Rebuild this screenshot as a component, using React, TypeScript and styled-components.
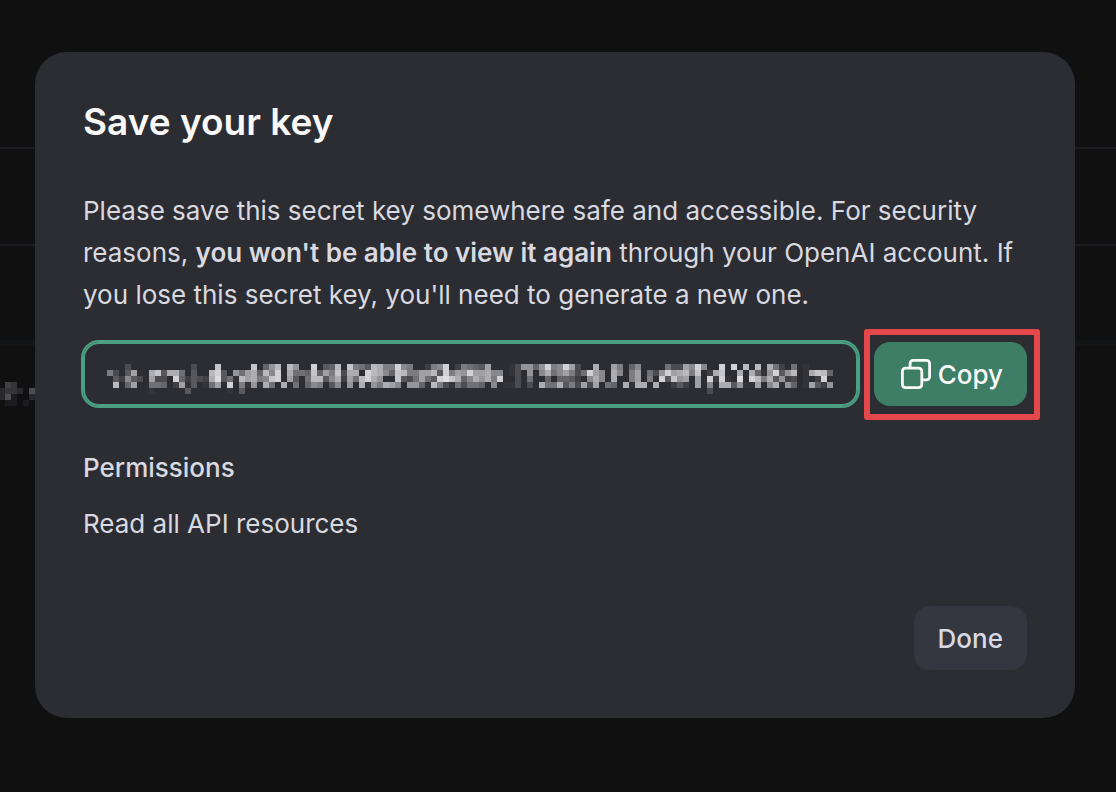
import React from "react";
import styled, { createGlobalStyle } from "styled-components";

const GlobalStyle = createGlobalStyle`
  *, *::before, *::after { box-sizing: border-box; }
  body {
    margin: 0;
    background: #101010;
    color: #d9d9e0;
    font-family: Inter, "Liberation Sans", sans-serif;
    font-size: 26px;
    line-height: 42px;
  }
  h1, h2, p { margin: 0; }
`;

const Screen = styled.div`
  display: grid;
  min-height: 100vh;
`;

const Backdrop = styled.div`
  grid-area: 1 / 1;
  overflow: hidden;
`;

const BackdropRow = styled.div<{ $height: number; $line?: number; $color?: string }>`
  height: ${(p) => p.$height}px;
  border-bottom: ${(p) => p.$line ?? 2}px solid ${(p) => p.$color ?? "#1d1d21"};
`;

const BackdropCell = styled.div`
  padding-top: 36px;
  line-height: 0;
`;

const Dialog = styled.section`
  grid-area: 1 / 1;
  position: relative;
  align-self: start;
  margin: 52px 41px 74px 35px;
  padding: 48px;
  border-radius: 32px;
  background: #2c2d32;
`;

const Title = styled.h1`
  margin-bottom: 46px;
  color: #f9f9f9;
  font-size: 37px;
  font-weight: 600;
  line-height: 44px;
`;

const Message = styled.p`
  strong { font-weight: 600; }
`;

const KeyRow = styled.div`
  display: flex;
  gap: 16px;
  margin: 26px 0 41px;
`;

const KeyField = styled.div`
  position: relative;
  flex: 1;
  height: 64px;
`;

const KeyInput = styled.input`
  display: block;
  width: 100%;
  height: 100%;
  padding: 0 24px;
  border: 2px solid #4aa081;
  border-radius: 16px;
  outline: 0;
  box-shadow: 0 0 0 2px #4aa081;
  background: transparent;
  color: inherit;
  font: inherit;
`;

const KeyMask = styled.div`
  position: absolute;
  top: 22px;
  left: 24px;
  line-height: 0;
  pointer-events: none;
`;

const Highlighted = styled.div`
  position: relative;
  &::after {
    content: "";
    position: absolute;
    inset: -13px -13px -14px -10px;
    border: 6px solid #e5484a;
    border-radius: 3px;
    pointer-events: none;
  }
`;

const Button = styled.button<{ $primary?: boolean }>`
  display: flex;
  align-items: center;
  justify-content: center;
  gap: 6px;
  height: 64px;
  padding: 2px 24px 0;
  border: 0;
  border-radius: 16px;
  background: ${(p) => (p.$primary ? "#3f7e66" : "#353740")};
  color: ${(p) => (p.$primary ? "#f9f9f9" : "#d9d9e3")};
  font: inherit;
  font-weight: 500;
  cursor: pointer;
`;

const Subheading = styled.h2`
  margin-bottom: 14px;
  font-size: 26px;
  font-weight: 500;
  line-height: 42px;
`;

const Footer = styled.footer`
  display: flex;
  justify-content: flex-end;
  margin-top: 61px;
`;

const CELL = 6;

/* One hex digit per cell: 0 is clear, f is the brightest. */
const KEY_ROWS = [
  "000300000000003000d00000d059" +
    "c0c900e045c0d764cb77e8700278e0276" +
    "54a000139959e78ea300b00a70580000" +
    "633a8e800e0e0c0c0b6206010000",
  "7304a00bd4bb60400ce4096ab5c8" +
    "e0b665d5a7d3bb0ecb85dc77aac4e7a9e" +
    "aab880130908b68a736ea80b807a0639" +
    "eabc7d02bd00b0b519e49c01bdc5",
  "0428430a330e52432bf461cab78d" +
    "e0a406cc48b2a6ceb900d436a64efdb58" +
    "b9b7e003060050554208b80b007a070e" +
    "4d9a0a0e2e10f0ec7b49230102e0",
  "0c05a0066502a14016a0e07191b6" +
    "0b06058704809" + "0b197ba80995" + "1c731636" +
    "650801130" + "30b66b473a3a0650b1bb0b0" +
    "02420a080bb4911a08b19501a429",
  "0000000100000400000010400000" + "0".repeat(72) + "3",
];

const PAGE_ROWS = ["0430000", "2332050", "2510020", "0110100"];

function Mosaic({ rows, low, high, shift = 0 }: { rows: string[]; low: number; high: number; shift?: number }) {
  const width = Math.max(...rows.map((row) => row.length)) * CELL - shift;
  const height = rows.length * CELL;
  return (
    <svg
      width={width}
      height={height}
      viewBox={`${shift} 0 ${width} ${height}`}
      shapeRendering="crispEdges"
      aria-hidden="true"
    >
      {rows.flatMap((row, y) =>
        [...row].map((digit, x) => {
          const level = parseInt(digit, 16);
          if (!level) return null;
          const tone = Math.round(low + ((high - low) * level) / 15);
          return (
            <rect
              key={`${x}-${y}`}
              x={x * CELL}
              y={y * CELL}
              width={CELL}
              height={CELL}
              fill={`rgb(${tone}, ${tone}, ${tone + 4})`}
            />
          );
        }),
      )}
    </svg>
  );
}

function CopyIcon() {
  return (
    <svg width="34" height="32" viewBox="0 0 34 32" fill="none" stroke="currentColor" strokeWidth="2.8" aria-hidden="true">
      <rect x="4.4" y="9.2" width="19.4" height="19.4" rx="3" />
      <path d="M12.1 9.2V4.4a3 3 0 0 1 3-3h13.5a3 3 0 0 1 3 3v13.4a3 3 0 0 1-3 3h-4.8" />
    </svg>
  );
}

export default function App() {
  return (
    <Screen>
      <GlobalStyle />
      <Backdrop aria-hidden="true">
        <BackdropRow $height={149} />
        <BackdropRow $height={97} />
        <BackdropRow $height={100} $line={6} $color="#131415" />
        <BackdropCell>
          <Mosaic rows={PAGE_ROWS} low={16} high={200} shift={1} />
        </BackdropCell>
      </Backdrop>
      <Dialog role="dialog" aria-labelledby="dialog-title">
        <Title id="dialog-title">Save your key</Title>
        <Message>
          Please save this secret key somewhere safe and accessible. For security reasons,{" "}
          <strong>you won't be able to view it again</strong> through your OpenAI account. If you lose
          this secret key, you'll need to generate a new one.
        </Message>
        <KeyRow>
          <KeyField>
            <KeyInput aria-label="Secret key" readOnly />
            <KeyMask>
              <Mosaic rows={KEY_ROWS} low={40} high={222} />
            </KeyMask>
          </KeyField>
          <Highlighted>
            <Button $primary type="button">
              <CopyIcon />
              Copy
            </Button>
          </Highlighted>
        </KeyRow>
        <Subheading>Permissions</Subheading>
        <p>Read all API resources</p>
        <Footer>
          <Button type="button">Done</Button>
        </Footer>
      </Dialog>
    </Screen>
  );
}
